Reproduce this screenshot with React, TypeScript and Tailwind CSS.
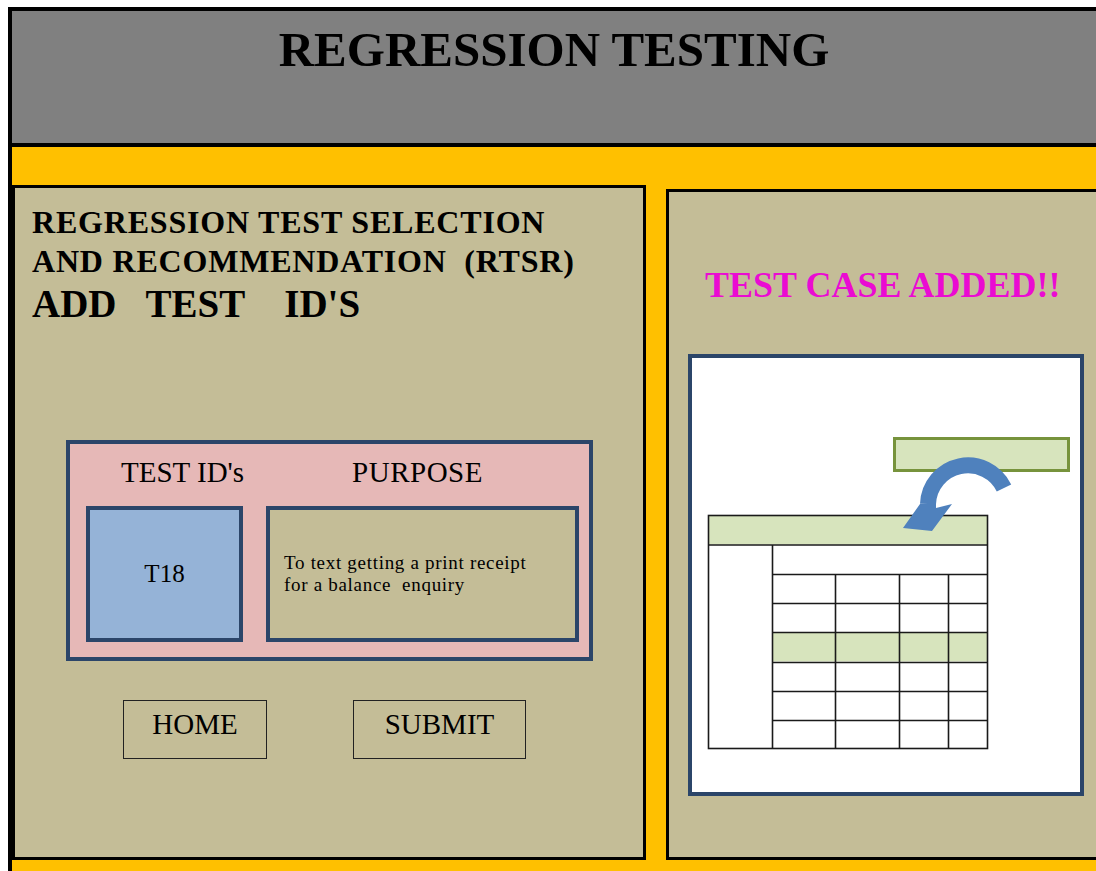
import React from 'react';

const serif = { fontFamily: '"Liberation Serif", "Times New Roman", serif' };

// little table drawing inside the white preview box
const TablePreview: React.FC = () => {
  const cols = [80, 143, 207, 256, 296];
  const rows = [216, 245, 274, 304, 333, 362, 391];
  return (
    <svg width="388" height="434" viewBox="0 0 388 434" className="block">
      <rect x="202.5" y="80.5" width="174" height="32" fill="#D7E4BD" stroke="#77933C" strokeWidth="3" />
      {/* table */}
      <rect x="16.5" y="157.5" width="279" height="29" fill="#D7E4BD" />
      <rect x="80.5" y="274.5" width="215" height="29" fill="#D7E4BD" />
      <g stroke="#1a1a1a" strokeWidth="1.6" fill="none">
        <rect x="16.5" y="157.5" width="279" height="233" />
        <line x1="16.5" y1="187" x2="295.5" y2="187" />
        <line x1="80.5" y1="187" x2="80.5" y2="391" />
        {rows.slice(0, -1).map((y) => (
          <line key={y} x1="80.5" y1={y + 0.5} x2="295.5" y2={y + 0.5} />
        ))}
        {cols.slice(1, -1).map((x) => (
          <line key={x} x1={x + 0.5} y1="216.5" x2={x + 0.5} y2="391" />
        ))}
      </g>
      {/* curved arrow */}
      <path d="M 312 130 A 40 40 0 0 0 236 146" fill="none" stroke="#4F81BD" strokeWidth="16" />
      <polygon points="228,146 211,170 240,173 260,146 244,150 244,146" fill="#4F81BD" />
    </svg>
  );
};

export default function App() {
  return (
    <div className="w-[1096px] h-[871px] overflow-hidden bg-white pl-2 pt-[7px]" style={serif}>
      <div className="h-full bg-[#FFC000] border-l-4 border-black flex flex-col">
        <header className="h-[140px] shrink-0 bg-[#808080] border-y-4 border-black pt-[14px] text-center">
          <h1 className="text-[49px] leading-none font-bold text-black">REGRESSION TESTING</h1>
        </header>

        <div className="h-[38px] shrink-0" />

        <div className="flex items-start">
          {/* left panel */}
          <section className="w-[634px] h-[675px] shrink-0 bg-[#C4BD97] border-[3px] border-black flex flex-col">
            <div className="h-[252px] shrink-0 pl-[17px] pt-[15px] text-black">
              <p className="text-[32px] leading-[39px] font-bold tracking-[0.8px]">REGRESSION TEST SELECTION</p>
              <p className="text-[32px] leading-[39px] font-bold tracking-[0.8px] whitespace-pre">AND RECOMMENDATION  (RTSR)</p>
              <p className="text-[39px] leading-none font-bold mt-[3px] flex">
                <span>ADD</span>
                <span className="ml-[29px]">TEST</span>
                <span className="ml-[39px]">ID'S</span>
              </p>
            </div>

            <div className="ml-[51px] w-[527px] h-[221px] bg-[#E6B8B7] border-4 border-[#2B4569] pt-[14px] pb-[15px]">
              <div className="flex text-[29px] leading-none text-black">
                <span className="ml-[51px]">TEST ID's</span>
                <span className="ml-[108px] tracking-[0.5px]">PURPOSE</span>
              </div>
              <div className="flex mt-[19px]">
                <div className="ml-[16px] w-[157px] h-[136px] bg-[#95B3D7] border-4 border-[#2B4569] flex items-center justify-center text-[25px] text-black">
                  T18
                </div>
                <div className="ml-[23px] w-[313px] h-[136px] bg-[#C4BD97] border-4 border-[#2B4569] flex items-center pl-[14px] text-[19px] leading-[22px] tracking-[0.7px] text-black">
                  <p className="whitespace-pre">{'To text getting a print receipt\nfor a balance  enquiry'}</p>
                </div>
              </div>
            </div>

            <div className="flex mt-[39px] ml-[108px]">
              <button className="w-[144px] h-[59px] border border-[#222] text-[29px] leading-none pt-[9px] flex justify-center text-black">
                HOME
              </button>
              <button className="ml-[86px] w-[173px] h-[59px] border border-[#222] text-[29px] leading-none pt-[9px] flex justify-center text-black">
                SUBMIT
              </button>
            </div>
          </section>

          {/* right panel */}
          <section className="ml-[20px] mt-[4px] flex-1 h-[671px] bg-[#C4BD97] border-[3px] border-r-0 border-black pt-[75px]">
            <p className="ml-[36px] text-[36px] leading-none font-bold text-[#EA0BD2] whitespace-nowrap">TEST CASE ADDED!!</p>
            <div className="ml-[19px] mt-[51px] w-[396px] h-[442px] bg-white border-4 border-[#2B4569]">
              <TablePreview />
            </div>
          </section>
        </div>
      </div>
    </div>
  );
}
